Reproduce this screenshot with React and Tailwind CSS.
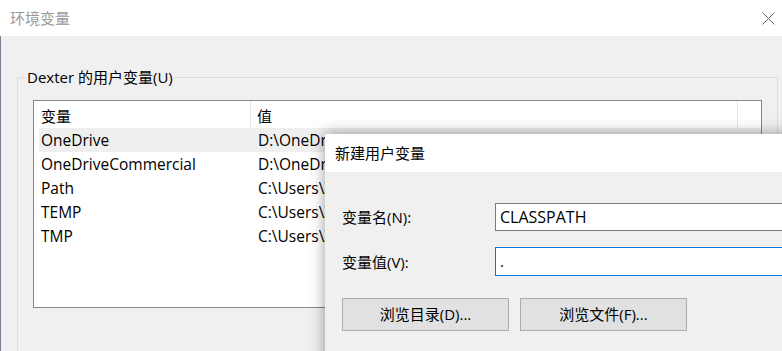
import React from "react";

const font = { fontFamily: "'Open Sans', 'Noto Sans CJK SC', sans-serif" };

const rows = [
  ["OneDrive", "D:\\OneDrive", true],
  ["OneDriveCommercial", "D:\\OneDrive", false],
  ["Path", "C:\\Users\\Z", false],
  ["TEMP", "C:\\Users\\Z", false],
  ["TMP", "C:\\Users\\Z", false],
];

export default function App() {
  return (
    <div
      className="relative w-[782px] h-[351px] overflow-hidden bg-[#f0f0f0] text-black"
      style={font}
    >
      {/* title bar */}
      <div className="h-[36px] bg-white flex items-center justify-between pl-[10px] pr-[4px]">
        <span className="text-[15px] leading-[20px] text-[#9a9a9a]">环境变量</span>
        <svg width="13" height="13" viewBox="0 0 13 13" className="mr-[3px]">
          <line x1="0.5" y1="0.5" x2="12.5" y2="12.5" stroke="#6d6d6d" strokeWidth="1" />
          <line x1="12.5" y1="0.5" x2="0.5" y2="12.5" stroke="#6d6d6d" strokeWidth="1" />
        </svg>
      </div>

      {/* body */}
      <div className="h-[315px] border-l border-[#7b8090] pl-[16px] pt-[31px]">
        <fieldset className="w-[761px] h-[320px] border border-[#dcdcdc] p-0 m-0">
          <legend className="ml-[8px] px-[1px] text-[15px] leading-[20px]">
            Dexter 的用户变量(U)
          </legend>
          <div className="pl-[15px] pt-[13px]">
            <div className="w-[729px] h-[208px] border border-[#828790] bg-white">
              {/* header */}
              <div className="flex h-[27px] text-[15px] leading-[20px]">
                <div className="w-[217px] border-r border-[#e5e5e5] pl-[7px] pt-[5px]">变量</div>
                <div className="w-[487px] border-r border-[#e5e5e5] pl-[6px] pt-[5px]">值</div>
                <div className="flex-1" />
              </div>
              {rows.map(([n, v, sel]) => (
                <div
                  key={n}
                  className={`ml-[5px] flex h-[24px] items-center text-[15.5px] leading-[20px] ${sel ? "bg-[#efefef]" : ""}`}
                >
                  <div className="w-[219px] pl-[2px]">{n}</div>
                  <div className="pl-[0px]">{v}</div>
                </div>
              ))}
            </div>
          </div>
        </fieldset>
      </div>

      {/* new variable dialog (overlay) */}
      <div className="absolute left-[325px] top-[134px] w-[500px] h-[240px] bg-[#f0f0f0] shadow-[0_0_14px_rgba(0,0,0,0.4)]">
        <div className="h-[38px] bg-white flex items-center pl-[10px] text-[15px] leading-[20px] text-black">
          新建用户变量
        </div>
        <div className="pl-[17px] pt-[31px]">
          <div className="flex items-center h-[28px]">
            <div className="w-[153px] text-[15px] leading-[20px]">变量名(N):</div>
            <div className="w-[320px] h-[28px] border border-[#7a7a7a] bg-white flex items-center pl-[4px] text-[16px]">
              CLASSPATH
            </div>
          </div>
          <div className="flex items-center h-[29px] mt-[16px]">
            <div className="w-[153px] text-[15px] leading-[20px]">变量值(V):</div>
            <div className="w-[320px] h-[29px] border border-[#0078d7] bg-white flex items-center pl-[4px] text-[15px]">
              .
            </div>
          </div>
          <div className="flex gap-[11px] mt-[22px]">
            <div className="w-[167px] h-[33px] bg-[#e1e1e1] border border-[#adadad] flex items-center justify-center text-[15px]">
              浏览目录(D)...
            </div>
            <div className="w-[167px] h-[33px] bg-[#e1e1e1] border border-[#adadad] flex items-center justify-center text-[15px]">
              浏览文件(F)...
            </div>
          </div>
        </div>
      </div>
    </div>
  );
}
